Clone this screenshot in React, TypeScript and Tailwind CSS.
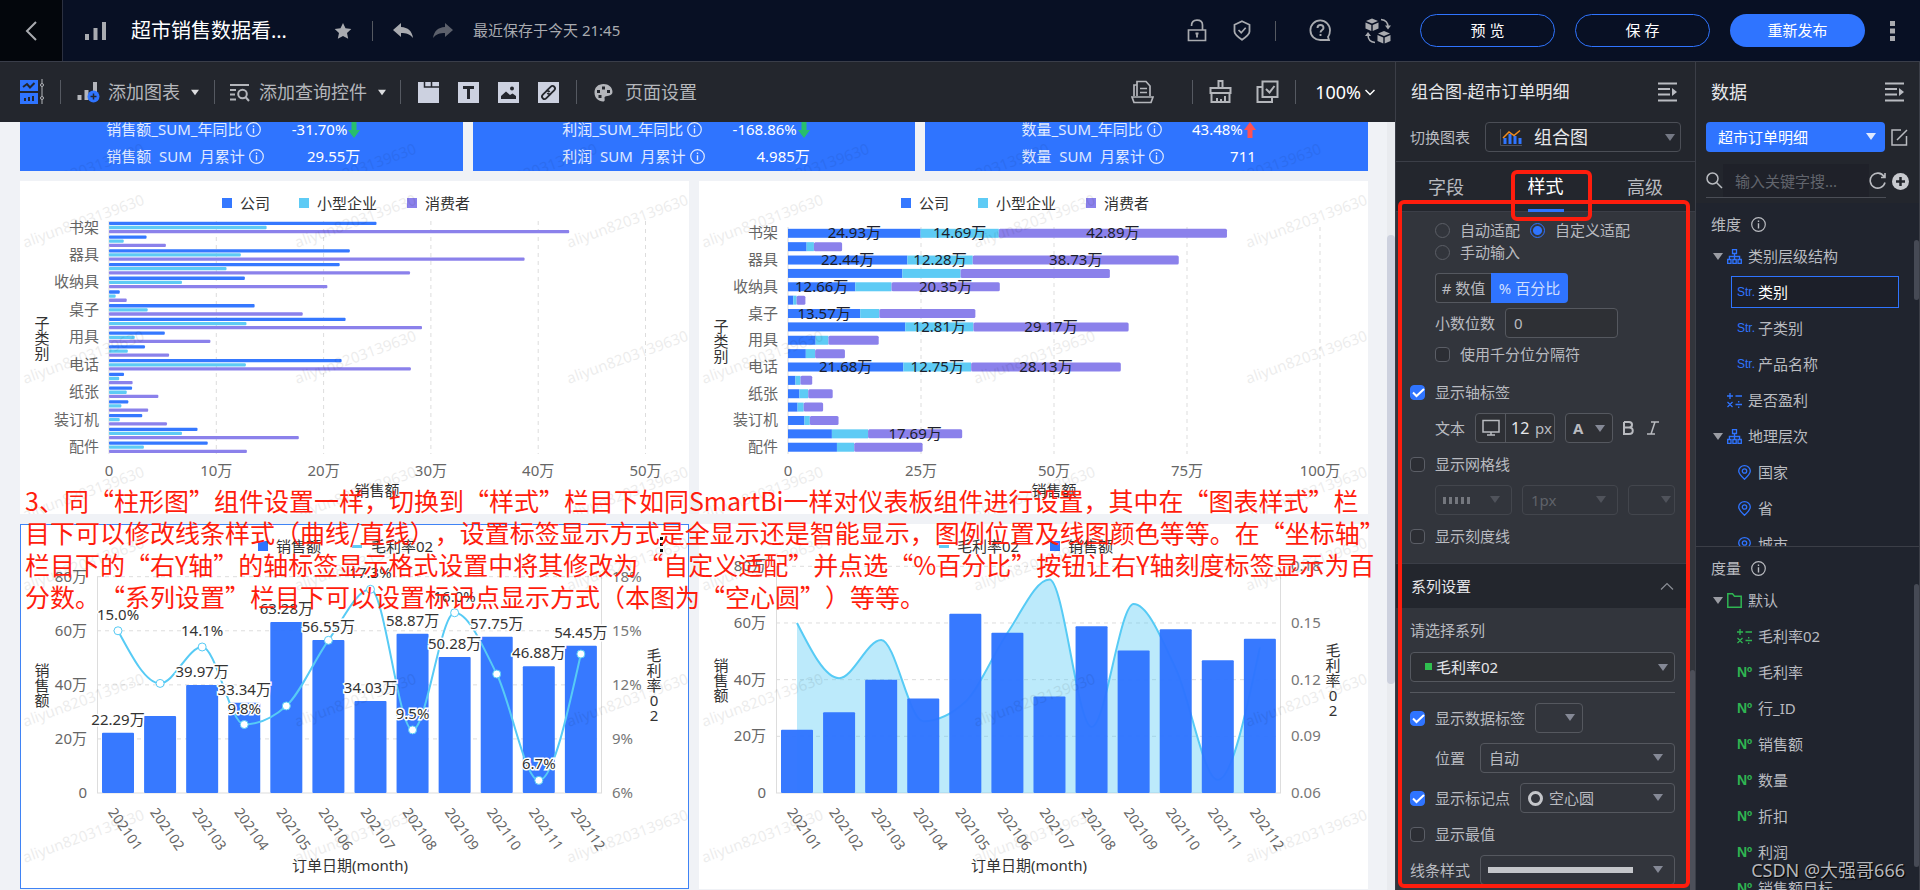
import type { ReactNode } from "react";

const categories = [
    { name: "书架", values: [24.93, 14.69, 42.89], labels: [0, 1, 2] },
    { name: "", values: [3.5, 1.37, 5.3], labels: [] },
    { name: "器具", values: [22.44, 12.28, 38.73], labels: [0, 1, 2] },
    { name: "", values: [21.5, 10.95, 28.05], labels: [] },
    { name: "收纳具", values: [12.66, 6.8, 20.35], labels: [0, 2] },
    { name: "", values: [1.0, 0.62, 1.65], labels: [] },
    { name: "桌子", values: [13.57, 3.6, 18.05], labels: [0] },
    { name: "", values: [22.05, 12.81, 29.17], labels: [1, 2] },
    { name: "用具", values: [5.2, 2.4, 9.45], labels: [] },
    { name: "", values: [3.35, 1.75, 5.6], labels: [] },
    { name: "电话", values: [21.68, 12.75, 28.13], labels: [0, 1, 2] },
    { name: "", values: [1.4, 0.95, 2.2], labels: [] },
    { name: "纸张", values: [2.15, 1.65, 4.6], labels: [] },
    { name: "", values: [1.8, 1.15, 3.65], labels: [] },
    { name: "装订机", values: [3.1, 1.0, 5.4], labels: [] },
    { name: "", values: [8.25, 6.8, 17.69], labels: [2] },
    { name: "配件", values: [9.2, 3.25, 12.85], labels: [] },
];

const months = [
    { month: "202101", sales: 22.29, rate: 15.0, showSales: true, showRate: true },
    { month: "202102", sales: 28.5, rate: 12.08, showSales: false, showRate: false },
    { month: "202103", sales: 39.97, rate: 14.1, showSales: true, showRate: true },
    { month: "202104", sales: 33.34, rate: 9.8, showSales: true, showRate: true },
    { month: "202105", sales: 63.28, rate: 10.83, showSales: true, showRate: false },
    { month: "202106", sales: 56.55, rate: 14.47, showSales: true, showRate: false },
    { month: "202107", sales: 34.03, rate: 17.3, showSales: true, showRate: true },
    { month: "202108", sales: 58.87, rate: 9.5, showSales: true, showRate: true },
    { month: "202109", sales: 50.28, rate: 16.0, showSales: true, showRate: true },
    { month: "202110", sales: 57.75, rate: 12.6, showSales: true, showRate: false },
    { month: "202111", sales: 46.88, rate: 6.7, showSales: true, showRate: true },
    { month: "202112", sales: 54.45, rate: 13.71, showSales: true, showRate: false },
];

const kpis = [
    { name: "销售额", ratio: "-31.70%", up: false, total: "29.55万" },
    { name: "利润", ratio: "-168.86%", up: false, total: "4.985万" },
    { name: "数量", ratio: "43.48%", up: true, total: "711" },
];

const seriesColors = ["#3578ff", "#5ecbf5", "#8b81eb"];
const seriesNames = ["公司", "小型企业", "消费者"];

const noteLines = [
    "3、同“柱形图”组件设置一样，切换到“样式”栏目下如同SmartBi一样对仪表板组件进行设置，其中在“图表样式”栏",
    "目下可以修改线条样式（曲线/直线），设置标签显示方式是全显示还是智能显示，图例位置及线图颜色等等。在“坐标轴”",
    "栏目下的“右Y轴”的轴标签显示格式设置中将其修改为“自定义适配”并点选“%百分比”按钮让右Y轴刻度标签显示为百",
    "分数。“系列设置”栏目下可以设置标记点显示方式（本图为“空心圆”）等等。",
];

// monotone cubic path through the points
function smoothPath(points: number[][]) {
    const n = points.length;
    const slopes: number[] = [];
    for (let i = 0; i < n - 1; i++) {
        slopes.push((points[i + 1][1] - points[i][1]) / (points[i + 1][0] - points[i][0]));
    }
    const tangents = points.map((_, i) => {
        if (i === 0 || i === n - 1) return 0;
        const a = slopes[i - 1];
        const b = slopes[i];
        if (a * b <= 0) return 0;
        return Math.sign(a) * Math.min(Math.abs(a), Math.abs(b), Math.abs(a + b) / 4) * 2;
    });
    tangents[0] = (3 * slopes[0] - tangents[1]) / 2;
    tangents[n - 1] = (3 * slopes[n - 2] - tangents[n - 2]) / 2;
    let d = `M${points[0][0]},${points[0][1]}`;
    for (let i = 0; i < n - 1; i++) {
        const dx = (points[i + 1][0] - points[i][0]) / 3;
        d += `C${points[i][0] + dx},${points[i][1] + dx * tangents[i]} ${points[i + 1][0] - dx},${points[i + 1][1] - dx * tangents[i + 1]} ${points[i + 1][0]},${points[i + 1][1]}`;
    }
    return d;
}

function Watermark({ top = 67, opacity = 0.07 }: { top?: number; opacity?: number }) {
    return (
        <svg className="pointer-events-none absolute inset-0 h-full w-full" aria-hidden="true">
            {[0, 1, 2].map((row) =>
                [0, 1, 2].map((col) => (
                    <text
                        key={`${row}-${col}`}
                        transform={`translate(${5 + col * 272} ${top + row * 136}) rotate(-20)`}
                        fontSize="15"
                        fill="#000"
                        opacity={opacity}
                    >
                        aliyun8203139630
                    </text>
                ))
            )}
        </svg>
    );
}

function T({ x, y, children, anchor = "start", fill = "#666", halo = false }: {
    x: number; y: number; children: ReactNode; anchor?: "start" | "middle" | "end"; fill?: string; halo?: boolean;
}) {
    return (
        <text
            x={x}
            y={y}
            fontSize="15"
            fill={fill}
            textAnchor={anchor}
            dominantBaseline="central"
            stroke={halo ? "#fff" : undefined}
            strokeWidth={halo ? 3 : undefined}
            paintOrder="stroke"
        >
            {children}
        </text>
    );
}

function VerticalText({ text, x, y }: { text: string; x: number; y: number }) {
    return (
        <>
            {text.split("").map((char, i) => (
                <T key={i} x={x} y={y + i * 15} anchor="middle" fill="#333">{char}</T>
            ))}
        </>
    );
}

function SeriesLegend() {
    return (
        <>
            {[202, 279, 387].map((x, i) => (
                <g key={x}>
                    <rect x={x} y={17} width={10} height={10} fill={seriesColors[i]} />
                    <T x={x + 18} y={22} fill="#333">{seriesNames[i]}</T>
                </g>
            ))}
        </>
    );
}

function GroupedBars() {
    return (
        <svg viewBox="0 0 669 333" className="block h-auto w-full" role="img">
            <SeriesLegend />
            {[0, 1, 2, 3, 4, 5].map((i) => (
                <g key={i}>
                    <line x1={89 + i * 107.3} x2={89 + i * 107.3} y1={40} y2={273} stroke="#ddd" strokeDasharray={i ? "4 4" : undefined} />
                    <T x={89 + i * 107.3} y={289} anchor="middle">{i ? `${i * 10}万` : "0"}</T>
                </g>
            ))}
            {categories.map((item, i) => (
                <g key={i}>
                    <T x={79} y={45.5 + i * 13.73} anchor="end">{item.name}</T>
                    {item.values.map((v, s) => (
                        <rect key={s} x={89} y={40.7 + i * 13.73 + s * 4.13} width={v * 10.73} height={3.3} rx={1} fill={seriesColors[s]} />
                    ))}
                </g>
            ))}
            <VerticalText text="子类别" x={22} y={142} />
            <T x={357} y={309} anchor="middle" fill="#333">销售额</T>
        </svg>
    );
}

function StackedBars() {
    const scale = 5.32;
    return (
        <svg viewBox="0 0 669 333" className="block h-auto w-full" role="img">
            <SeriesLegend />
            {[0, 1, 2, 3, 4].map((i) => (
                <g key={i}>
                    <line x1={89 + i * 133} x2={89 + i * 133} y1={46} y2={273} stroke="#ddd" strokeDasharray={i ? "4 4" : undefined} />
                    <T x={89 + i * 133} y={289} anchor="middle">{i ? `${i * 25}万` : "0"}</T>
                </g>
            ))}
            {categories.map((item, i) => {
                const y = 52.3 + i * 13.37;
                let x = 89;
                return (
                    <g key={i}>
                        <T x={79} y={y - 1} anchor="end">{item.name}</T>
                        {item.values.map((v, s) => {
                            const left = x;
                            x += v * scale;
                            return <rect key={s} x={left} y={y - 4.5} width={v * scale} height={9} rx={s === 2 ? 1.5 : 0} fill={seriesColors[s]} />;
                        })}
                    </g>
                );
            })}
            {categories.map((item, i) =>
                item.labels.map((s) => {
                    const before = item.values.slice(0, s).reduce((a, b) => a + b, 0);
                    return (
                        <T key={`${i}-${s}`} x={89 + (before + item.values[s] / 2) * scale} y={51.3 + i * 13.37} anchor="middle" fill="#1d1f2b">
                            {item.values[s].toFixed(2)}万
                        </T>
                    );
                })
            )}
            <VerticalText text="子类别" x={22} y={145} />
            <T x={355} y={309} anchor="middle" fill="#333">销售额</T>
        </svg>
    );
}

function ComboChart({ area = false }: { area?: boolean }) {
    const top = area ? 42.3 : 52.7;
    const bottom = 269;
    const step = (bottom - top) / 4;
    const center = (i: number) => 98 + i * 42.08;
    const points = months.map((m, i) => [center(i), bottom - ((m.rate - 6) / 3) * step]);
    const path = smoothPath(points);
    const rates = area ? ["0.06", "0.09", "0.12", "0.15", "0.18"] : ["6%", "9%", "12%", "15%", "18%"];
    const line = <path d={path} fill="none" stroke="#57cbf5" strokeWidth="2" />;

    return (
        <svg viewBox="0 0 669 365" className="block h-auto w-full" role="img">
            {area ? (
                <>
                    <rect x={240} y={21} width={10} height={3} fill="#5ecbf5" />
                    <T x={258} y={22} fill="#333">毛利率02</T>
                    <rect x={351} y={17} width={10} height={10} fill="#2f74ff" />
                    <T x={369} y={22} fill="#333">销售额</T>
                </>
            ) : (
                <>
                    <rect x={238} y={17} width={10} height={10} fill="#2f74ff" />
                    <T x={256} y={22} fill="#333">销售额</T>
                    <rect x={332} y={21} width={10} height={3} fill="#5ecbf5" />
                    <T x={351} y={22} fill="#333">毛利率02</T>
                    {[14, 20, 26].map((y) => <rect key={y} x={640} y={y - 1} width={3} height={3} fill="#111" />)}
                </>
            )}
            {[0, 1, 2, 3, 4].map((i) => (
                <g key={i}>
                    <line x1={77} x2={582} y1={bottom - i * step} y2={bottom - i * step} stroke="#ddd" strokeDasharray={i ? "4 4" : undefined} />
                    <T x={67} y={bottom - i * step - 1} anchor="end">{i ? `${i * 20}万` : "0"}</T>
                    <T x={592} y={bottom - i * step - 1} fill="#777">{rates[i]}</T>
                </g>
            ))}
            <path d={`M77.5 ${top}V${bottom}M581.5 ${top}V${bottom}`} stroke="#ddd" />
            {area && <path d={`${path}L${center(11)},${bottom}L${center(0)},${bottom}Z`} fill="#57cbf5" opacity="0.4" />}
            {area && line}
            {months.map((m, i) => {
                const h = (m.sales / 20) * step;
                return <rect key={m.month} x={center(i) - 16} y={bottom - h} width={32} height={h} rx={1} fill="#2f74ff" opacity="0.96" />;
            })}
            {!area && line}
            {!area && points.map(([x, y]) => <circle key={x} cx={x} cy={y} r={4} fill="#fff" stroke="#57cbf5" />)}
            {!area && months.map((m, i) => (
                <g key={m.month}>
                    {m.showSales && <T x={center(i)} y={bottom - (m.sales / 20) * step - 14} anchor="middle" fill="#333" halo>{m.sales.toFixed(2)}万</T>}
                    {m.showRate && <T x={center(i)} y={points[i][1] - 17} anchor="middle" fill="#333" halo>{m.rate.toFixed(1)}%</T>}
                </g>
            ))}
            {months.map((m, i) => (
                <text key={m.month} transform={`translate(${center(i) - 6} 285) rotate(55)`} fontSize="14" fill="#666" dominantBaseline="central">
                    {m.month}
                </text>
            ))}
            <VerticalText text="销售额" x={22} y={area ? 141 : 146} />
            <VerticalText text="毛利率02" x={634} y={area ? 126 : 131} />
            <T x={330} y={341} anchor="middle" fill="#333">订单日期(month)</T>
        </svg>
    );
}

function Svg({ w = 22, h, className = "", children }: { w?: number; h?: number; className?: string; children: ReactNode }) {
    return (
        <svg width={w} height={h ?? w} viewBox={`0 0 ${w} ${h ?? w}`} className={`shrink-0 ${className}`} fill="none" stroke="currentColor" strokeWidth="2" aria-hidden="true">
            {children}
        </svg>
    );
}

function Caret({ className = "" }: { className?: string }) {
    return (
        <Svg w={10} h={7} className={className}>
            <path d="M0 0h10L5 7Z" fill="currentColor" stroke="none" />
        </Svg>
    );
}

function Info({ className = "" }: { className?: string }) {
    return (
        <Svg w={15} className={className}>
            <circle cx="7.5" cy="7.5" r="6.8" strokeWidth="1.2" />
            <path d="M7.5 6.2V11.5M7.5 3.5V5" strokeWidth="1.4" />
        </Svg>
    );
}

function Collapse() {
    return (
        <button type="button" aria-label="收起" className="text-[#b9bbc1]">
            <Svg w={20}>
                <path d="M0 1.5H19M0 7H12M0 12.5H12M0 18.5H19" />
                <path d="M14 6L19 10L14 14Z" fill="currentColor" stroke="none" />
            </Svg>
        </button>
    );
}

function Divider({ className = "" }: { className?: string }) {
    return <div className={`w-px shrink-0 bg-[#555961] ${className}`} />;
}

function Select({ label, value, className = "", caret = "right-2", icon, disabled = false }: {
    label: string; value: string; className?: string; caret?: string; icon?: ReactNode; disabled?: boolean;
}) {
    return (
        <div className={`relative h-[30px] ${className}`}>
            <select
                aria-label={label}
                disabled={disabled}
                className={`h-full w-full appearance-none rounded-sm border bg-transparent pl-2 ${disabled ? "border-[#43464d] text-[#5f6269]" : "border-[#55585f] bg-[#2e3035]"} ${icon ? "pl-7" : ""}`}
            >
                <option>{value}</option>
            </select>
            {icon && <span className="pointer-events-none absolute inset-y-0 left-2 flex items-center">{icon}</span>}
            <Caret className={`pointer-events-none absolute top-[11px] ${caret} ${disabled ? "text-[#50535b]" : "text-[#858996]"}`} />
        </div>
    );
}

function Check({ label, checked = false }: { label: string; checked?: boolean }) {
    return (
        <label className="flex items-center gap-[10px]">
            <span className="relative flex">
                <input
                    type="checkbox"
                    defaultChecked={checked}
                    className="peer h-[15px] w-[15px] appearance-none rounded-sm border border-[#5b5e66] bg-[#2c2e34] checked:border-[#2f74ff] checked:bg-[#2f74ff]"
                />
                <svg viewBox="0 0 15 15" className="pointer-events-none absolute inset-0 hidden peer-checked:block" fill="none" stroke="#fff" strokeWidth="2">
                    <path d="M3 7.5L6.5 11L14 4" />
                </svg>
            </span>
            {label}
        </label>
    );
}

function Radio({ label, checked = false }: { label: string; checked?: boolean }) {
    return (
        <label className="flex items-center gap-[10px]">
            <input
                type="radio"
                name="fit"
                defaultChecked={checked}
                className="h-[15px] w-[15px] appearance-none rounded-full border border-[#5b5e66] checked:border-[#2f74ff] checked:bg-[radial-gradient(circle,#2f74ff_0_4px,transparent_5px)]"
            />
            {label}
        </label>
    );
}

function Header() {
    return (
        <header className="flex h-[62px] shrink-0 items-center border-b border-[#393d49] bg-[#081024] text-[#a9abb0]">
            <button type="button" aria-label="返回" className="flex h-full w-[63px] items-center justify-center border-r border-[#2b3040] bg-[#03060c]">
                <Svg w={12} h={20}><path d="M11 1L2 10L11 19" /></Svg>
            </button>
            <Svg w={22} h={18} className="ml-[22px]">
                <path d="M2 12V18M10.500 6V18M19 0V18" strokeWidth="4" />
            </Svg>
            <h1 className="ml-6 w-[164px] truncate text-xl text-white">超市销售数据看板分析</h1>
            <button type="button" aria-label="收藏" className="ml-[39px]">
                <Svg w={18}>
                    <path d="M9 1L11.500 6.300L17.300 7L13 11L14.200 16.800L9 14L3.800 16.800L5 11L.7 7L6.500 6.300Z" fill="currentColor" stroke="none" />
                </Svg>
            </button>
            <Divider className="ml-5 h-5" />
            <button type="button" aria-label="撤销" className="ml-5">
                <Svg w={20} h={16}>
                    <path d="M8 0V4C15 4.500 19 8 20 15C17 11 13 10 8 10V14L0 7Z" fill="currentColor" stroke="none" />
                </Svg>
            </button>
            <button type="button" aria-label="重做" className="ml-5 text-[#5c606b]">
                <Svg w={20} h={16}>
                    <path d="M12 0V4C5 4.500 1 8 0 15C3 11 7 10 12 10V14L20 7Z" fill="currentColor" stroke="none" />
                </Svg>
            </button>
            <span className="ml-5 text-[15px]">最近保存于今天 21:45</span>
            <div className="ml-auto flex items-center">
                <button type="button" aria-label="锁定">
                    <Svg w={20} h={23}>
                        <path d="M1.500 11H18.500V21.500H1.500ZM4.500 7C4.500 3 6.500 1.200 10 1.200C13.500 1.200 15.500 3 15.500 6V11" strokeWidth="1.700" />
                        <path d="M10 14V18.500M8.500 14.500H11.500" strokeWidth="1.800" />
                    </Svg>
                </button>
                <button type="button" aria-label="安全" className="ml-[26px]">
                    <Svg w={18} h={21}>
                        <path d="M9 1.200L16.500 4.800V11.500C16.500 14.500 13 17 9 19.800C5 17 1.500 14.500 1.500 11.500V4.800Z" strokeWidth="1.800" />
                        <path d="M5.500 10L8.200 12.700L12.700 7.800" strokeWidth="1.700" />
                    </Svg>
                </button>
                <Divider className="ml-6 h-5" />
                <button type="button" aria-label="帮助" className="ml-[33px]">
                    <Svg w={23}>
                        <path d="M20 21H11.500A9.800 9.800 0 1 1 21 11.300C21 14.500 20.500 16 19 18Z" strokeWidth="1.800" />
                        <path d="M8.500 9C8.500 5 14.500 5 14.500 9C14.500 11 11.500 11 11.500 13.500M11.500 15V17" strokeWidth="1.900" />
                    </Svg>
                </button>
                <button type="button" aria-label="切换版本" className="ml-[33px]">
                    <Svg w={26}>
                        <path d="M1 3L7 .5L13 3L7 5.500ZM.500 4.500L6.300 7V13L.5 10.500ZM13.500 4.500L7.700 7V13L13.500 10.500ZM13 15.500L19 13L25 15.500L19 18ZM12.500 17L18.300 19.500V25.500L12.500 23ZM25.500 17L19.700 19.500V25.500L25.500 23Z" fill="currentColor" stroke="none" />
                        <path d="M16 1.500C21 2 23 4 23 9M10 24.500C5 24 3 22 3 17" strokeWidth="1.500" />
                        <path d="M20 7.500H26L23 11.500ZM0 18H6L3 14Z" fill="currentColor" stroke="none" />
                    </Svg>
                </button>
                <div className="ml-[29px] flex gap-5 text-[15px] text-white">
                    <button type="button" className="h-[33px] w-[135px] rounded-full border border-[#2f74ff]">预 览</button>
                    <button type="button" className="h-[33px] w-[135px] rounded-full border border-[#2f74ff]">保 存</button>
                    <button type="button" className="h-[33px] w-[135px] rounded-full bg-[#2f74ff]">重新发布</button>
                </div>
                <button type="button" aria-label="更多" className="mr-6 ml-6">
                    <Svg w={7} h={20}>
                        <path d="M1 0H6V5H1ZM1 7.500H6V12.500H1ZM1 15H6V20H1Z" fill="currentColor" stroke="none" />
                    </Svg>
                </button>
            </div>
        </header>
    );
}

function Toolbar() {
    return (
        <div className="flex h-[60px] shrink-0 items-center bg-[#23262d] text-lg text-[#b4b6bb]">
            <button type="button" aria-label="布局" className="ml-5">
                <Svg w={24} h={26}>
                    <path d="M0 1H18V12H0ZM0 14H18V25H0Z" fill="#2f74ff" stroke="none" />
                    <path d="M3 8L7 5L10 8.500L14.500 4M5 22V19M9 22V18M13 22V17" stroke="#23262d" />
                    <path d="M22 0V4M22 8V17M22 21V25" strokeWidth="1" />
                    <circle cx="22" cy="6" r="1.500" strokeWidth="1" />
                    <circle cx="22" cy="19" r="1.500" strokeWidth="1" />
                </Svg>
            </button>
            <Divider className="ml-4 h-6" />
            <button type="button" className="ml-4 flex items-center">
                <Svg w={23}>
                    <path d="M2.500 14V19M9.500 9V19M18 1V12" strokeWidth="4" />
                    <circle cx="16.500" cy="15.500" r="6" fill="#2f74ff" stroke="none" />
                    <path d="M16.500 12.500V18.500M13.500 15.500H19.500" stroke="#23262d" strokeWidth="1.500" />
                </Svg>
                <span className="mr-[11px] ml-2">添加图表</span>
                <Caret className="w-2 text-[#dcdde0]" />
            </button>
            <Divider className="ml-[15px] h-6" />
            <button type="button" className="ml-[14px] flex items-center">
                <Svg w={22}>
                    <path d="M1 4H20M1 9H7M1 13.500H6M1 18.500H7" />
                    <circle cx="13.500" cy="13" r="4.300" />
                    <path d="M16.500 16L20 20" />
                </Svg>
                <span className="mr-[11px] ml-2">添加查询控件</span>
                <Caret className="w-2 text-[#dcdde0]" />
            </button>
            <Divider className="ml-[14px] h-6" />
            <div className="ml-[17px] flex gap-[19px] text-[#ccd1e0]">
                <button type="button" aria-label="标签页">
                    <Svg w={21}>
                        <path d="M0 0H21V21H0Z" fill="currentColor" stroke="none" />
                        <path d="M6.500 0V5H21M13.500 0V5" stroke="#23262d" strokeWidth="1.500" />
                    </Svg>
                </button>
                <button type="button" aria-label="文本">
                    <Svg w={21}>
                        <path d="M0 0H21V21H0Z" fill="currentColor" stroke="none" />
                        <path d="M5 5.500H16M10.500 5V17" stroke="#23262d" strokeWidth="3" />
                    </Svg>
                </button>
                <button type="button" aria-label="图片">
                    <Svg w={21}>
                        <path d="M0 0H21V21H0Z" fill="currentColor" stroke="none" />
                        <path d="M3 17V14L8 9.500L12 13L14.500 11.500L18 14V17Z" fill="#23262d" stroke="none" />
                        <circle cx="14" cy="6.500" r="2" fill="#23262d" stroke="none" />
                    </Svg>
                </button>
                <button type="button" aria-label="链接">
                    <Svg w={21}>
                        <path d="M0 0H21V21H0Z" fill="currentColor" stroke="none" />
                        <g transform="rotate(45 10.500 10.500)" stroke="#23262d" strokeWidth="1.800">
                            <path d="M8 11.500V5C8 1.500 13 1.500 13 5V9C13 11 11.500 12 10 11.500M13 9.500V16C13 19.500 8 19.500 8 16V12C8 10 9.500 9 11 9.500" />
                        </g>
                    </Svg>
                </button>
            </div>
            <Divider className="ml-[17px] h-6" />
            <button type="button" className="ml-[17px] flex items-center gap-3">
                <Svg w={19}>
                    <path d="M9.500 1C4 1 0.500 4.500 .5 9.500C.5 15 4.500 18.500 9 18.500C11.500 18.500 10.500 16 10.500 14.500C11 12 18.500 14 18.500 9C18.500 4 14.500 1 9.500 1Z" fill="currentColor" stroke="none" />
                    <path d="M8 3.500h3v3H8ZM3 7h3v3H3ZM13 7h3v3h-3ZM4.500 12h3v3h-3Z" fill="#23262d" stroke="none" />
                </Svg>
                页面设置
            </button>
            <div className="mr-5 ml-auto flex items-center">
                <button type="button" aria-label="导出">
                    <Svg w={23} h={24}>
                        <path d="M6 16V1.500H15L19 6V16M3 16V5H6M1 17H22L20 22.500H3ZM9 8.500H16M9 12.500H16" strokeWidth="1.700" />
                    </Svg>
                </button>
                <Divider className="ml-[38px] h-6" />
                <button type="button" aria-label="格式刷" className="ml-4">
                    <Svg w={23} h={24}>
                        <path d="M9.500 8V1H13.500V8M1.500 8H21.500V13H1.500ZM2.500 13V22H20.500V13M8 22V18M12 22V19M16 22V16" strokeWidth="2" />
                    </Svg>
                </button>
                <button type="button" aria-label="批量" className="ml-6">
                    <Svg w={23} h={24}>
                        <path d="M6.500 1.500H21.500V17H6.500ZM6.500 7H1.500V22H16V17M10 9L13.500 12.500L18.500 6" strokeWidth="2" />
                    </Svg>
                </button>
                <Divider className="ml-4 h-6" />
                <button type="button" className="ml-[19px] flex items-center gap-1 text-white">
                    100%
                    <Svg w={10} h={7}><path d="M.5 1L5 5.500L9.500 1" strokeWidth="1.500" /></Svg>
                </button>
            </div>
        </div>
    );
}

function KpiCard({ name, ratio, up, total }: (typeof kpis)[number]) {
    return (
        <div className="relative flex h-[49px] flex-1 items-end justify-center gap-7 overflow-hidden bg-[#2f74ff] pr-4 pb-px text-[15px] leading-[27px] text-white">
            <div>
                <div className="flex items-center gap-1 opacity-85">{name}_SUM_年同比<Info /></div>
                <div className="flex items-center gap-1 whitespace-pre opacity-85">{name}{"  SUM  "}月累计<Info /></div>
            </div>
            <div className="text-right">
                <div className="flex items-center justify-end gap-px">
                    {ratio}
                    <Svg w={12} h={16} className={up ? "text-[#ff5252]" : "rotate-180 text-[#28bf6b]"}>
                        <path d="M6 0L12 8H8.500V16H3.500V8H0Z" fill="currentColor" stroke="none" />
                    </Svg>
                </div>
                <div>{total}</div>
            </div>
            <Watermark top={75} opacity={0.06} />
        </div>
    );
}

function Canvas() {
    return (
        <main className="relative flex min-h-0 flex-1 overflow-hidden bg-[#f0f2f6]">
            <div className="flex min-w-0 flex-1 flex-col gap-[10px] pr-[19px] pl-5">
                <div className="flex gap-[10px]">
                    {kpis.map((kpi) => <KpiCard key={kpi.name} {...kpi} />)}
                </div>
                <div className="grid grid-cols-2 gap-[10px]">
                    <section className="relative bg-white"><GroupedBars /><Watermark /></section>
                    <section className="relative bg-white"><StackedBars /><Watermark /></section>
                    <section className="relative bg-white outline -outline-offset-1 outline-[#3f83f5]"><ComboChart /><Watermark /></section>
                    <section className="relative bg-white"><ComboChart area /><Watermark /></section>
                </div>
            </div>
            <div className="w-2 shrink-0 bg-[#e9ebef] pt-[113px]">
                <div className="h-[449px] rounded bg-[#cdd1de]" />
            </div>
            <p lang="zh-CN" className="pointer-events-none absolute top-[362px] left-[25px] font-['Noto_Sans_CJK_SC',sans-serif] text-[25px] leading-8 whitespace-nowrap text-[#ff1d0d] [text-spacing-trim:space-all]">
                {noteLines.map((line) => <span key={line} className="block">{line}</span>)}
            </p>
        </main>
    );
}

function StylePanel() {
    return (
        <aside className="relative flex w-[301px] shrink-0 flex-col border-x border-[#3b3e47] bg-[#23262d] text-[15px] leading-[22px] text-[#b9bbc0]">
            <div className="flex h-[60px] items-center justify-between pr-[17px] pl-[15px]">
                <h2 className="text-[17px] text-[#e6e7ea]">组合图-超市订单明细</h2>
                <Collapse />
            </div>
            <div className="flex h-10 items-start gap-[15px] border-b border-[#3b3e47] pr-[14px] pl-[14px]">
                <label htmlFor="chart-type" className="leading-[30px]">切换图表</label>
                <div className="relative h-[30px] flex-1">
                    <select id="chart-type" className="h-full w-full appearance-none rounded-sm border border-[#4b4e56] pl-12 text-lg text-[#e6e7ea]">
                        <option>组合图</option>
                    </select>
                    <Svg w={22} h={17} className="pointer-events-none absolute top-[7px] left-[15px]">
                        <path d="M.5 0V16.500H22" stroke="#4d515b" strokeWidth="1" />
                        <path d="M5 15V9M10 15V5M15 15V7M20 15V9" stroke="#2f74ff" strokeWidth="3" />
                        <path d="M3 9L9 3L14 6.500L20 1.500" stroke="#f08c1e" strokeWidth="1.500" />
                    </Svg>
                    <Caret className="pointer-events-none absolute top-3 right-[6px] text-[#747884]" />
                </div>
            </div>
            <div className="flex h-[50px] items-start justify-between border-b border-[#3b3e47] px-8 text-lg">
                <button type="button" className="h-[50px]">字段</button>
                <button type="button" className="h-[50px] border-b-3 border-[#2f74ff] text-white">样式</button>
                <button type="button" className="h-[50px]">高级</button>
            </div>

            <div className="relative min-h-0 flex-1 overflow-hidden bg-[#32353c] pr-[5px]">
                <div className="pt-[7px] pr-[15px] pl-[39px]">
                    <div className="flex flex-wrap gap-x-[10px]">
                        <Radio label="自动适配" />
                        <Radio label="自定义适配" checked />
                    </div>
                    <Radio label="手动输入" />
                    <div className="mt-[10px] flex h-[30px]">
                        <button type="button" className="w-14 rounded-l-sm border border-r-0 border-[#55585f] bg-[#2e3035]"># 数值</button>
                        <button type="button" className="w-[77px] rounded-r-sm bg-[#2f74ff] text-[#cfdfff]">% 百分比</button>
                    </div>
                    <label className="mt-[5px] flex items-center gap-[10px]">
                        小数位数
                        <input type="text" defaultValue="0" className="h-[30px] w-[113px] rounded-sm border border-[#55585f] bg-[#2e3035] px-2" />
                    </label>
                    <div className="mt-[5px]"><Check label="使用千分位分隔符" /></div>
                </div>
                <div className="mt-4 pr-[15px] pl-[14px]">
                    <Check label="显示轴标签" checked />
                    <div className="mt-[10px] flex items-center pl-[25px]">
                        <span>文本</span>
                        <div className="ml-[10px] flex h-[30px] w-20 items-center rounded-sm border border-[#55585f] bg-[#2e3035]">
                            <span className="flex h-full w-[30px] items-center justify-center border-r border-[#55585f]">
                                <Svg w={18}>
                                    <path d="M1 1.500H17V13H1ZM5 16H13M9 13V16" strokeWidth="1.500" />
                                </Svg>
                            </span>
                            <input aria-label="字号" defaultValue="12" className="w-[25px] pl-[5px] text-base text-[#e6e7ea]" />
                            <span className="pl-1">px</span>
                        </div>
                        <button type="button" aria-label="颜色" className="ml-[10px] flex h-[30px] w-12 items-center justify-between rounded-sm border border-[#55585f] bg-[#2e3035] px-[7px]">
                            <b>A</b>
                            <Caret className="text-[#858996]" />
                        </button>
                        <button type="button" aria-label="加粗" className="ml-[9px]">
                            <Svg w={12} h={14}>
                                <path d="M2 1H7C11 1 11 6.500 7 6.500H2M7 6.500C12 6.500 12 13 7 13H2V1" />
                            </Svg>
                        </button>
                        <button type="button" aria-label="斜体" className="ml-[13px]">
                            <Svg w={12} h={14}>
                                <path d="M4 1H12M0 13H8M8 1L4 13" strokeWidth="1.500" />
                            </Svg>
                        </button>
                    </div>
                    <div className="mt-[10px]"><Check label="显示网格线" /></div>
                    <div className="mt-[10px] flex gap-[10px] pl-[25px]">
                        <Select
                            label="线型"
                            value=""
                            className="w-[77px]"
                            caret="right-3"
                            disabled
                            icon={<Svg w={28} h={7} className="text-[#74777e]"><path d="M0 3.500H28" strokeWidth="7" strokeDasharray="3 3" /></Svg>}
                        />
                        <Select label="线宽" value="1px" className="w-24" caret="right-3" disabled />
                        <Select label="线条颜色" value="" className="w-[47px]" caret="right-1" disabled />
                    </div>
                    <div className="mt-[10px]"><Check label="显示刻度线" /></div>
                </div>
                <button type="button" className="mt-4 flex h-[45px] w-full items-center justify-between border-t border-[#3b3e47] bg-[#23262d] pr-4 pl-[15px] text-[#e6e7ea]">
                    系列设置
                    <Svg w={14} h={8} className="text-[#8b8e96]"><path d="M1 7.500L7 1.500L13 7.500" strokeWidth="1.200" /></Svg>
                </button>
                <div className="pt-[11px] pr-[15px] pl-[14px]">
                    <div>请选择系列</div>
                    <div className="mt-[11px] border-b border-[#55585f] pb-[10px]">
                        <div className="relative h-[30px]">
                            <select aria-label="请选择系列" className="h-full w-full appearance-none rounded-sm border border-[#55585f] bg-[#2e3035] pl-[25px] text-[#e6e7ea]">
                                <option>毛利率02</option>
                            </select>
                            <span className="absolute top-[11px] left-[15px] h-[7px] w-[7px] bg-[#2fbf4f]" />
                            <Caret className="pointer-events-none absolute top-3 right-[7px] text-[#858996]" />
                        </div>
                    </div>
                    <div className="mt-[10px] flex items-center gap-[10px]">
                        <Check label="显示数据标签" checked />
                        <Select label="标签颜色" value="" className="w-12" />
                    </div>
                    <label className="mt-[10px] flex items-center gap-[15px] pl-[25px]">
                        位置
                        <Select label="位置" value="自动" className="flex-1" caret="right-3" />
                    </label>
                    <div className="mt-[10px] flex items-center gap-[10px]">
                        <Check label="显示标记点" checked />
                        <Select
                            label="标记点"
                            value="空心圆"
                            className="flex-1"
                            caret="right-3"
                            icon={<span className="h-[15px] w-[15px] rounded-full border-3 border-[#c4c6ca]" />}
                        />
                    </div>
                    <div className="mt-[10px]"><Check label="显示最值" /></div>
                    <div className="mt-[10px] flex items-center gap-[10px]">
                        <span>线条样式</span>
                        <Select
                            label="线条样式"
                            value=""
                            className="flex-1"
                            caret="right-3"
                            icon={<span className="h-[6px] w-[145px] bg-[#c4c6ca]" />}
                        />
                    </div>
                </div>
                <div className="absolute top-[458px] right-0 bottom-0 w-[5px] rounded-t bg-[#4d505a]" />
            </div>

            {/* red marker frames */}
            <div className="pointer-events-none absolute top-[138px] right-[5px] bottom-[2px] left-[2px] rounded-md border-4 border-[#ff1d0d]" />
            <div className="pointer-events-none absolute top-[108px] left-[115px] h-[51px] w-[81px] rounded-md border-4 border-[#ff1d0d]" />
        </aside>
    );
}

type FieldKind = "tree" | "str" | "calc" | "pin" | "folder" | "no";

function FieldIcon({ kind }: { kind: FieldKind }) {
    if (kind === "str") return <span className="w-[21px] font-['Liberation_Sans',sans-serif] text-xs">Str.</span>;
    if (kind === "no") return <span className="w-[21px] font-['Liberation_Sans',sans-serif] text-sm font-bold">Nº</span>;
    if (kind === "pin") {
        return (
            <Svg w={15} className="mr-[6px]">
                <path d="M7.500 14.300C4 11 1.700 8.500 1.700 6C1.700 3 4.200 .7 7.500 .7C10.800 .7 13.300 3 13.300 6C13.300 8.500 11 11 7.500 14.300Z" strokeWidth="1.300" />
                <circle cx="7.500" cy="6" r="2.200" strokeWidth="1.300" />
            </Svg>
        );
    }
    if (kind === "calc") {
        return (
            <Svg w={15} className="mr-[6px]">
                <path d="M0 3H6M3 0V6M8.500 3H15M.500 9L5.500 14M5.500 9L.500 14M8.500 11.500H15M11.700 8V9.500M11.700 13.500V15" strokeWidth="1.300" />
            </Svg>
        );
    }
    if (kind === "folder") {
        return (
            <Svg w={15} className="mr-[6px]">
                <path d="M.8 .8H5.500L7.500 3.200H14.200V14.200H.8Z" strokeWidth="1.500" />
            </Svg>
        );
    }
    return (
        <Svg w={15} className="mr-[6px]">
            <path d="M5.500 .7H9.500V4.500H5.500ZM.7 10.500H4V14.300H.7ZM5.900 10.500H9.200V14.300H5.900ZM11 10.500H14.300V14.300H11ZM7.500 4.500V10.500M2.400 10.500V7.500H12.600V10.500" strokeWidth="1.300" />
        </Svg>
    );
}

function Field({ kind, name, level = 1, green = false, selected = false, open = false }: {
    kind: FieldKind; name: string; level?: number; green?: boolean; selected?: boolean; open?: boolean;
}) {
    return (
        <li className="flex h-9 items-center pr-[20px]">
            <button
                type="button"
                className={`flex h-8 flex-1 items-center text-left ${level === 2 ? "ml-[35px] border pl-[5px]" : "ml-[17px]"} ${selected ? "border-[#2f74ff] bg-[#1c1f29] text-white" : "border-transparent"}`}
            >
                {level === 1 && <span className="w-[14px]">{open && <Caret className="text-[#9a9ca3]" />}</span>}
                <span className={`flex items-center ${green ? "text-[#2fb552]" : "text-[#2f74ff]"}`}><FieldIcon kind={kind} /></span>
                {name}
            </button>
        </li>
    );
}

function DataPanel() {
    return (
        <aside className="relative flex w-[224px] shrink-0 flex-col border-r border-[#3b3e47] bg-[#20242e] text-[15px] text-[#b9bbc0]">
            <div className="h-[141px] shrink-0 bg-[#23262d]">
                <div className="flex h-[60px] items-center justify-between pr-[14px] pl-[15px]">
                    <h2 className="text-lg text-[#e6e7ea]">数据</h2>
                    <Collapse />
                </div>
                <div className="flex items-center gap-[6px] pr-[11px] pl-[10px]">
                    <div className="relative h-[30px] flex-1">
                        <select aria-label="数据集" className="h-full w-full appearance-none rounded-sm bg-[#2f74ff] pl-3 text-white">
                            <option>超市订单明细</option>
                        </select>
                        <Caret className="pointer-events-none absolute top-[11px] right-[9px] text-[#dfe9ff]" />
                    </div>
                    <button type="button" aria-label="编辑">
                        <Svg w={17}><path d="M10 1H1V16H15.500V7M6 11L16 1" strokeWidth="1.500" /></Svg>
                    </button>
                </div>
                <div className="flex items-center pt-3 pr-[10px] pl-[10px]">
                    <label className="flex h-[34px] flex-1 items-center border-b border-[#4b4e56]">
                        <Svg w={17}><circle cx="6.500" cy="6.500" r="5.500" strokeWidth="1.500" /><path d="M10.500 10.500L16 16" strokeWidth="1.500" /></Svg>
                        <input type="search" aria-label="搜索" placeholder="输入关键字搜..." className="h-full w-[146px] bg-[#1f2129] pl-3 placeholder:text-[#62656d]" />
                        <Svg w={17}><path d="M15 4.500A7.500 7.500 0 1 0 16 10.500M16 1V5.500H12" strokeWidth="1.600" /></Svg>
                    </label>
                    <button type="button" aria-label="新增" className="ml-[6px]">
                        <Svg w={17}>
                            <circle cx="8.500" cy="8.500" r="8.500" fill="#c8cacf" stroke="none" />
                            <path d="M8.500 4V13M4 8.500H13" stroke="#23262d" strokeWidth="2.500" />
                        </Svg>
                    </button>
                </div>
            </div>
            <section className="relative h-[344px] shrink-0 overflow-hidden border-b border-[#3b3e47]">
                <h3 className="flex h-[35px] items-center gap-[10px] pt-2 pl-[15px]">维度<Info /></h3>
                <ul>
                    <Field kind="tree" name="类别层级结构" open />
                    <Field kind="str" name="类别" level={2} selected />
                    <Field kind="str" name="子类别" level={2} />
                    <Field kind="str" name="产品名称" level={2} />
                    <Field kind="calc" name="是否盈利" />
                    <Field kind="tree" name="地理层次" open />
                    <Field kind="pin" name="国家" level={2} />
                    <Field kind="pin" name="省" level={2} />
                    <Field kind="pin" name="城市" level={2} />
                </ul>
                <div className="absolute top-[37px] right-0 h-[60px] w-[5px] rounded bg-[#464a55]" />
            </section>
            <section className="relative min-h-0 flex-1 overflow-hidden">
                <h3 className="flex h-[35px] items-center gap-[10px] pt-2 pl-[15px]">度量<Info /></h3>
                <ul>
                    <Field kind="folder" name="默认" green open />
                    <Field kind="calc" name="毛利率02" level={2} green />
                    <Field kind="no" name="毛利率" level={2} green />
                    <Field kind="no" name="行_ID" level={2} green />
                    <Field kind="no" name="销售额" level={2} green />
                    <Field kind="no" name="数量" level={2} green />
                    <Field kind="no" name="折扣" level={2} green />
                    <Field kind="no" name="利润" level={2} green />
                    <Field kind="no" name="销售额目标" level={2} green />
                </ul>
                <div className="absolute top-[37px] right-0 h-[283px] w-[5px] rounded bg-[#464a55]" />
            </section>
            <span className="pointer-events-none absolute right-[14px] bottom-[6px] text-lg text-[#b5b6ba] [text-shadow:1px_1px_1px_#000]">CSDN @大强哥666</span>
        </aside>
    );
}

export default function App() {
    return (
        <div lang="zh-CN" className="flex h-screen flex-col overflow-hidden font-['Noto_Sans','Noto_Sans_CJK_SC',sans-serif]">
            <Header />
            <div className="flex min-h-0 flex-1">
                <div className="flex min-w-0 flex-1 flex-col">
                    <Toolbar />
                    <Canvas />
                </div>
                <StylePanel />
                <DataPanel />
            </div>
        </div>
    );
}
